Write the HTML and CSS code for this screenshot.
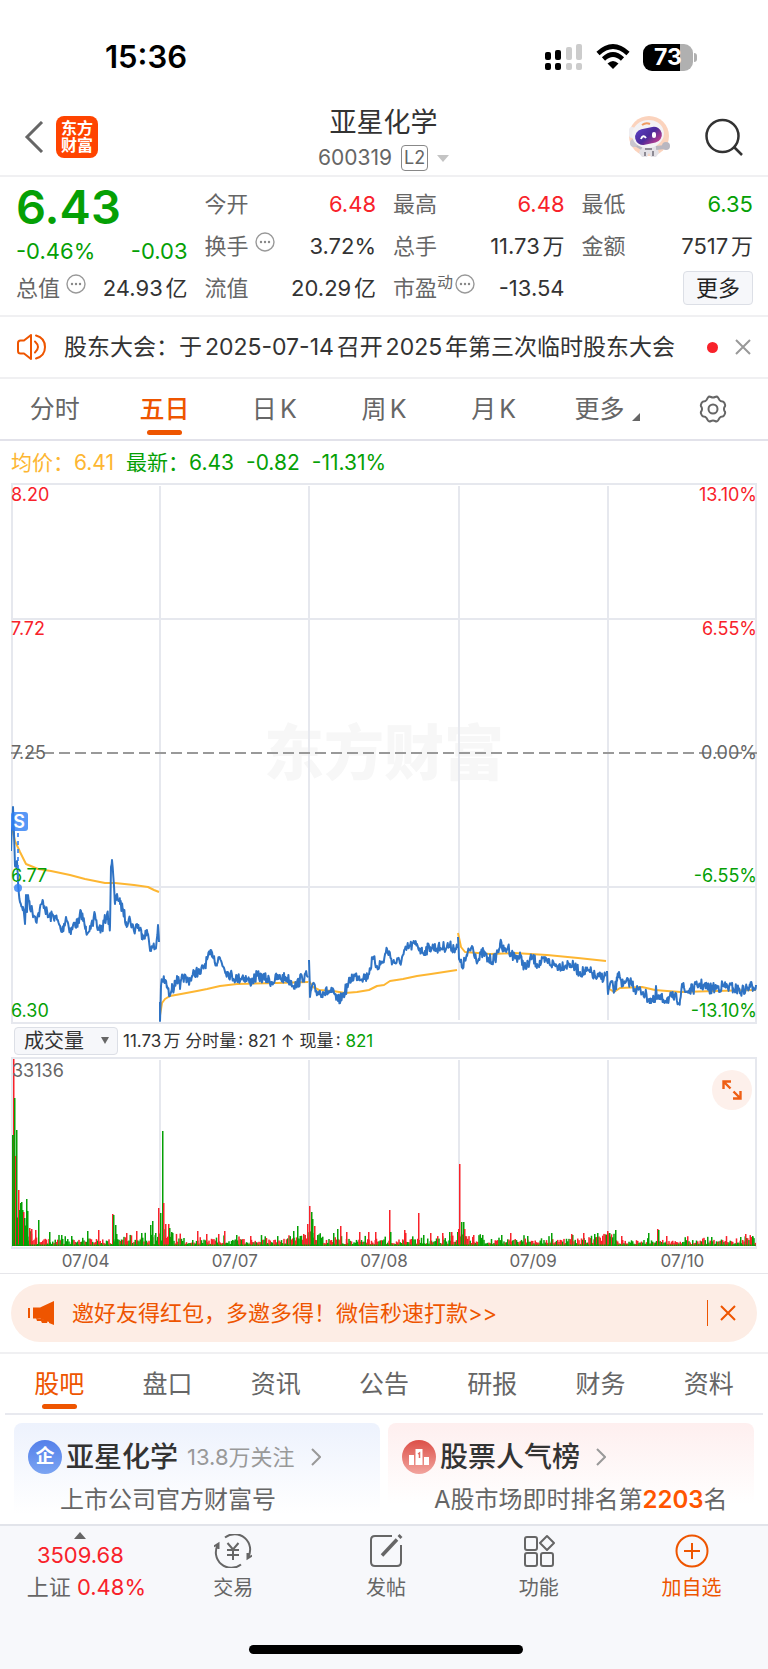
FILE: index.html
```html
<!DOCTYPE html>
<html lang="zh-CN">
<head>
    <meta charset="UTF-8">
    <meta name="viewport" content="width=device-width, initial-scale=1.0">
    <title>亚星化学 600319</title>
    <link rel="stylesheet" href="styles.css">
</head>
<body>
    <div class="statusbar">
        <span class="time">15:36</span>
        <div class="status-icons">
            <svg width="38" height="28" viewBox="0 0 38 28">
                <g fill="#000"><rect x="0" y="9" width="6" height="8" rx="2"/><rect x="10" y="7" width="6" height="10" rx="2"/><rect x="0" y="20" width="6" height="7" rx="2"/><rect x="10" y="20" width="6" height="7" rx="2"/></g>
                <g fill="#ccc"><rect x="21" y="4" width="6" height="13" rx="2"/><rect x="31" y="1" width="6" height="16" rx="2"/><rect x="21" y="20" width="6" height="7" rx="2"/><rect x="31" y="20" width="6" height="7" rx="2"/></g>
            </svg>
            <svg width="34" height="26" viewBox="0 0 34 26">
                <path d="M2 9.500Q17-4.500 32 9.500M7.500 15Q17 6 26.500 15" fill="none" stroke="#000" stroke-width="4.600"/>
                <path d="M11.500 19.500Q17 14.500 22.500 19.500L17 25Z"/>
            </svg>
            <div class="battery"><span>73</span></div>
        </div>
    </div>

    <header class="header">
        <div class="header-side">
            <button class="icon-btn" aria-label="返回">
                <svg width="20" height="32" viewBox="0 0 20 32"><path d="M18 1L3 16L18 31" fill="none" stroke="#666" stroke-width="3"/></svg>
            </button>
            <a class="logo" href="#">东方<br>财富</a>
        </div>
        <div class="title">
            <h1>亚星化学</h1>
            <div class="code">600319 <span class="level">L2</span> <i class="caret"></i></div>
        </div>
        <div class="header-side header-right">
            <button class="icon-btn" aria-label="智能助手">
                <svg width="42" height="42" viewBox="0 0 42 42">
                    <defs>
                        <linearGradient id="visor" x1="0" x2="1" y1="0" y2="1"><stop offset="0" stop-color="#5b3fc4"/><stop offset=".5" stop-color="#4b2a9a"/><stop offset="1" stop-color="#d8418c"/></linearGradient>
                    </defs>
                    <circle cx="21" cy="20" r="20" fill="#fbd3bd"/>
                    <path d="M14 28h14l3 9-3 4h-5l-2-4-2 4h-5l-3-4z" fill="#e3e1e6"/>
                    <path d="M17 33h7M17 36v4M25 35v5" stroke="#8d8a94" stroke-width="2"/>
                    <path d="M28 32L37 31M14 32L7 28" stroke="#b9b7c0" stroke-width="4"/>
                    <circle cx="6" cy="27" r="4" fill="#c9c6ce"/><circle cx="38" cy="30" r="4" fill="#b9b7c0"/>
                    <rect x="1" y="11" width="6" height="11" rx="3" fill="#eeedf1"/>
                    <ellipse cx="20" cy="18" rx="16" ry="14" fill="#f3f2f5" transform="rotate(-10 20 18)"/>
                    <path d="M14 9q4-3 8-1" stroke="#ef9b62" stroke-width="2" fill="none"/>
                    <rect x="7" y="12" width="27" height="16" rx="8" fill="url(#visor)" transform="rotate(-12 20 20)"/>
                    <path d="M13 23q2-5 5-1" stroke="#fff" stroke-width="2" fill="none"/><rect x="24" y="16" width="4" height="6" rx="2" fill="#fff"/>
                </svg>
            </button>
            <button class="icon-btn" aria-label="搜索">
                <svg width="38" height="38" viewBox="0 0 38 38" fill="none" stroke="#333" stroke-width="2.500"><circle cx="17.500" cy="18" r="16"/><path d="M29 29L37 37"/></svg>
            </button>
        </div>
    </header>

    <section class="quote">
        <div class="quote-col">
            <div class="price">6.43</div>
            <div class="change"><span>-0.46%</span><span>-0.03</span></div>
            <div class="row"><span class="label">总值 <svg class="more-dot" viewBox="0 0 20 20"><use href="#dots"/></svg></span><span>24.93亿</span></div>
        </div>
        <div class="quote-col">
            <div class="row"><span class="label">今开</span><span class="red">6.48</span></div>
            <div class="row"><span class="label">换手 <svg class="more-dot" viewBox="0 0 20 20"><use href="#dots"/></svg></span><span>3.72%</span></div>
            <div class="row"><span class="label">流值</span><span>20.29亿</span></div>
        </div>
        <div class="quote-col">
            <div class="row"><span class="label">最高</span><span class="red">6.48</span></div>
            <div class="row"><span class="label">总手</span><span>11.73万</span></div>
            <div class="row"><span class="label">市盈<sup>动</sup><svg class="more-dot" viewBox="0 0 20 20"><use href="#dots"/></svg></span><span>-13.54</span></div>
        </div>
        <div class="quote-col">
            <div class="row"><span class="label">最低</span><span class="green">6.35</span></div>
            <div class="row"><span class="label">金额</span><span>7517万</span></div>
            <div class="row row-end"><button class="more-btn">更多</button></div>
        </div>
        <svg class="defs" aria-hidden="true">
            <symbol id="dots" viewBox="0 0 20 20"><circle cx="10" cy="10" r="9" fill="none" stroke="#999" stroke-width="1.400"/><g fill="#888"><circle cx="6" cy="10" r="1.200"/><circle cx="10" cy="10" r="1.200"/><circle cx="14" cy="10" r="1.200"/></g></symbol>
        </svg>
    </section>

    <section class="notice">
        <svg width="30" height="26" viewBox="0 0 30 26" fill="none" stroke="#ee5500" stroke-width="2" stroke-linejoin="round"><path d="M14 1L7 6.500H3.500Q1 6.500 1 9V17Q1 19.500 3.500 19.500H7L14 25Z"/><path d="M18 7.500Q24 13 18 18.500M19 1.500Q28 4 28 13T19 24.500" stroke-linecap="round"/></svg>
        <a class="notice-text" href="#">股东大会：于2025-07-14召开2025年第三次临时股东大会</a>
        <i class="dot"></i>
        <button class="icon-btn" aria-label="关闭"><svg width="16" height="16" viewBox="0 0 16 16"><path d="M1 1L15 15M15 1L1 15" stroke="#999" stroke-width="2"/></svg></button>
    </section>

    <nav class="tabs period-tabs">
        <button>分时</button>
        <button class="active">五日</button>
        <button>日K</button>
        <button>周K</button>
        <button>月K</button>
        <button>更多<svg class="corner" width="8" height="8" viewBox="0 0 8 8"><path d="M8 0V8H0Z" fill="#666"/></svg></button>
        <button aria-label="设置">
            <svg width="28" height="28" viewBox="0 0 28 28" fill="none" stroke="#666" stroke-width="2" stroke-linejoin="round"><path d="M9 2.500Q10 1 12 2Q14 3 16 2Q18 1 19 2.500L20.500 5Q21.500 6.500 23.500 6.500Q25 6.500 26 9.500Q26.500 11 25.500 12Q24.500 14 25.500 16Q26.500 17 26 18.500Q25 21.500 23.500 21.500Q21.500 21.500 20.500 23L19 25.500Q18 27 16 26Q14 25 12 26Q10 27 9 25.500L7.500 23Q6.500 21.500 4.500 21.500Q3 21.500 2 18.500Q1.500 17 2.500 16Q3.500 14 2.500 12Q1.500 11 2 9.500Q3 6.500 4.500 6.500Q6.500 6.500 7.500 5Z"/><circle cx="14" cy="14" r="4.500"/></svg>
        </button>
    </nav>

    <main>
        <div class="averages">
            <span class="avg">均价：6.41</span>
            <span class="green">最新：6.43</span>
            <span class="green">-0.82</span>
            <span class="green">-11.31%</span>
        </div>

        <svg class="chart" viewBox="0 0 746 541">
            <text class="watermark" x="373" y="292" text-anchor="middle">东方财富</text>
            <g class="grid">
                <path d="M0 1H746M0 136H746M0 404H746M0 540H746M1 0V541M745 0V541M149 3V537M298 3V537M448 3V537M597 3V537"/>
            </g>
            <path class="zero" d="M0 270H746"/>
            <g id="averageLines" class="average-line"></g>
            <g id="priceLines" class="price-line"></g>
            <g class="axis">
                <text class="up" x="0" y="18">8.20</text>
                <text class="up" x="0" y="152">7.72</text>
                <text x="0" y="276">7.25</text>
                <text class="down" x="0" y="399">6.77</text>
                <text class="down" x="0" y="534">6.30</text>
            </g>
            <g class="axis" text-anchor="end">
                <text class="up" x="746" y="18">13.10%</text>
                <text class="up" x="746" y="152">6.55%</text>
                <text x="746" y="276">0.00%</text>
                <text class="down" x="746" y="399">-6.55%</text>
                <text class="down" x="746" y="534">-13.10%</text>
            </g>
            <!-- sell marker -->
            <g class="sell">
                <path d="M7 350V400" stroke-dasharray="4 4"/>
                <rect x="0" y="329" width="17" height="19" rx="3"/>
                <circle cx="7" cy="405" r="4"/>
                <text x="8" y="345" text-anchor="middle">S</text>
            </g>
        </svg>

        <div class="volume-bar">
            <select aria-label="指标">
                <option>成交量</option>
            </select>
            <span>11.73万 分时量: 821 ↑ 现量: <b class="green">821</b></span>
        </div>

        <div class="volume">
            <svg class="chart" viewBox="0 0 746 192">
                <g class="grid">
                    <path d="M0 1H746M0 191H746M1 0V192M745 0V192M149 3V189M298 3V189M448 3V189M597 3V189"/>
                </g>
                <g id="volumeBars"></g>
                <g class="axis"><text x="1" y="20">33136</text></g>
            </svg>
            <button class="expand" aria-label="全屏">
                <svg width="20" height="20" viewBox="0 0 20 20" fill="none" stroke="#ee5e14" stroke-width="2.400"><path d="M1.500 9V1.500H9M1.500 1.500L8.500 8.500M18.500 11V18.500H11M18.500 18.500L11.500 11.500"/></svg>
            </button>
        </div>
        <div class="dates">
            <span>07/04</span><span>07/07</span><span>07/08</span><span>07/09</span><span>07/10</span>
        </div>
    </main>

    <section class="promo-wrap">
        <div class="promo">
            <svg width="26" height="24" viewBox="0 0 26 24" fill="#ee5500"><path d="M0 7H2V17H0ZM5 6.500H12L26 0V24L21 22V21L12 17.500H5Z"/><path d="M8 17L9 20H13L14 22H19L20 19Z"/></svg>
            <a href="#">邀好友得红包，多邀多得！微信秒速打款&gt;&gt;</a>
            <i class="divider"></i>
            <button class="icon-btn" aria-label="关闭"><svg width="16" height="16" viewBox="0 0 16 16"><path d="M1 1L15 15M15 1L1 15" stroke="#ee5500" stroke-width="2"/></svg></button>
        </div>
    </section>

    <nav class="tabs info-tabs">
        <button class="active">股吧</button>
        <button>盘口</button>
        <button>资讯</button>
        <button>公告</button>
        <button>研报</button>
        <button>财务</button>
        <button>资料</button>
    </nav>

    <section class="cards">
        <a class="card card-blue" href="#">
            <div class="card-title">
                <span class="badge badge-blue">企</span>
                <strong>亚星化学</strong>
                <small>13.8万关注</small>
                <svg class="arrow" width="10" height="18" viewBox="0 0 10 18"><path d="M1 1L9 9L1 17"/></svg>
            </div>
            <p>上市公司官方财富号</p>
        </a>
        <a class="card card-red" href="#">
            <div class="card-title">
                <span class="badge badge-red"><svg width="20" height="18" viewBox="0 0 20 18"><path d="M0 7h5v10H0zM6.500 1h7v16h-7zM15 9h5v8h-5z" fill="#fff"/><path d="M9 6l1.500-1v5" stroke="#e26a62" stroke-width="1.500" fill="none"/></svg></span>
                <strong>股票人气榜</strong>
                <svg class="arrow" width="10" height="18" viewBox="0 0 10 18"><path d="M1 1L9 9L1 17"/></svg>
            </div>
            <p>A股市场即时排名第<b>2203</b>名</p>
        </a>
    </section>

    <footer class="footer">
        <nav class="toolbar">
            <a class="index" href="#">
                <i class="caret-up"></i>
                <span class="red">3509.68</span>
                <span class="index-name">上证 <span class="red">0.48%</span></span>
            </a>
            <a href="#">
                <svg width="38" height="34" viewBox="0 0 38 34" fill="none" stroke="#666" stroke-width="2"><path d="M11 3.500A15.500 15.500 0 0 1 34 23.500M27 30.500A15.500 15.500 0 0 1 4 10.500M38 21.500L33.500 24.500V19M0 12.500L4.500 9.500V15"/><path d="M13.500 9L19 15.500L24.500 9M19 15.500V26M13 16H25M13 21H25"/></svg>
                <span>交易</span>
            </a>
            <a href="#">
                <svg width="34" height="34" viewBox="0 0 34 34" fill="none" stroke="#666" stroke-width="2"><path d="M23 2H6Q2 2 2 6V28Q2 32 6 32H28Q32 32 32 28V11"/><path d="M13 21.500L28 5.500" stroke-width="3.500"/><path d="M30 3.500L32 1.500" stroke-width="4"/></svg>
                <span>发帖</span>
            </a>
            <a href="#">
                <svg width="32" height="34" viewBox="0 0 32 34" fill="none" stroke="#666" stroke-width="2"><rect x="2" y="3" width="12" height="13" rx="2"/><rect x="2" y="19" width="12" height="13" rx="2"/><rect x="18" y="19" width="12" height="13" rx="2"/><path d="M24 2L31 9L24 16L17 9Z" stroke-linejoin="round"/></svg>
                <span>功能</span>
            </a>
            <a class="add" href="#">
                <svg width="34" height="34" viewBox="0 0 34 34" fill="none" stroke="#ee5500" stroke-width="2"><circle cx="17" cy="17" r="15.500"/><path d="M17 9V25M9 17H25"/></svg>
                <span>加自选</span>
            </a>
        </nav>
        <div class="home-indicator"></div>
    </footer>

    <script src="script.js"></script>
</body>
</html>
```

FILE: styles.css
```css
* {
    box-sizing: border-box;
}

body {
    margin: 0;
    background-color: #fff;
    color: #333;
    font-family: Inter, "Noto Sans CJK SC", sans-serif;
    font-size: 22px;
    line-height: 32px;
    text-autospace: normal;
}

a {
    color: inherit;
    text-decoration: none;
}

button {
    padding: 0;
    border: none;
    background: none;
    color: inherit;
    font: inherit;
    cursor: pointer;
}

svg {
    display: block;
    flex: none;
}

.icon-btn {
    display: flex;
}

.defs {
    display: none;
}

.red {
    color: #f8222a;
}

.green {
    color: #05a005;
}

/* status bar */

.statusbar {
    display: flex;
    justify-content: space-between;
    align-items: center;
    padding: 36px 75px 0 105px;
}

.time {
    color: #000;
    font-size: 31px;
    font-weight: 600;
    line-height: 42px;
}

.status-icons {
    display: flex;
    align-items: center;
    gap: 13px;
}

.battery {
    position: relative;
    width: 50px;
    height: 27px;
    border-radius: 9px;
    background: linear-gradient(90deg, #000 73%, #b0b0b0 73%);
    color: #fff;
    font-size: 23px;
    font-weight: 700;
    line-height: 27px;
    text-align: center;
}

.battery::after {
    content: "";
    position: absolute;
    top: 9px;
    right: -4px;
    width: 3px;
    height: 9px;
    border-radius: 0 3px 3px 0;
    background-color: #b0b0b0;
}

/* header */

.header {
    display: grid;
    grid-template-columns: 1fr auto 1fr;
    align-items: center;
    height: 99px;
    padding: 20px 25px 0 24px;
    border-bottom: 2px solid #f0f0f2;
}

.header-side {
    display: flex;
    align-items: center;
    gap: 12px;
}

.header-right {
    justify-content: flex-end;
    gap: 35px;
}

.logo {
    width: 42px;
    height: 42px;
    padding-top: 4px;
    border-radius: 8px;
    background-color: #ff4400;
    color: #fff;
    font-size: 16px;
    font-weight: 700;
    line-height: 17px;
    text-align: center;
}

.title {
    padding-top: 7px;
    text-align: center;
}

.title h1 {
    margin: 0;
    font-size: 27px;
    font-weight: 400;
    line-height: 36px;
}

.code {
    display: flex;
    align-items: center;
    gap: 9px;
    color: #666;
    font-size: 21px;
    line-height: 34px;
}

.level {
    padding: 0 2px;
    border: 1px solid #888;
    border-radius: 4px;
    font-size: 18px;
    line-height: 24px;
}

.caret {
    border: 6px solid transparent;
    border-top: 7px solid #c4c4c4;
    border-bottom: none;
}

/* quote */

.quote {
    display: grid;
    grid-template-columns: repeat(4, 1fr);
    gap: 17px;
    padding: 6px 15px 6px 16px;
    border-bottom: 2px solid #f0f0f2;
}

.price {
    color: #05a005;
    font-size: 47px;
    font-weight: 600;
    line-height: 48px;
}

.change {
    display: flex;
    justify-content: space-between;
    padding-top: 4px;
    color: #05a005;
}

.row {
    display: flex;
    justify-content: space-between;
    align-items: center;
    height: 42px;
}

.row-end {
    justify-content: flex-end;
}

.label {
    display: flex;
    color: #666;
}

.label sup {
    font-size: 16px;
    line-height: 20px;
}

.more-dot {
    width: 20px;
    height: 20px;
    margin: 2px 0 0 6px;
}

sup + .more-dot {
    margin-left: 2px;
}

.more-btn {
    width: 70px;
    height: 34px;
    border: 1px solid #dcdfe6;
    border-radius: 4px;
    background-color: #f6f7fa;
    color: #222;
    line-height: 32px;
}

/* notice */

.notice {
    display: flex;
    align-items: center;
    height: 62px;
    padding: 0 17px;
    border-bottom: 2px solid #f0f0f2;
}

.notice-text {
    flex: 1;
    padding-left: 17px;
    font-size: 23px;
    white-space: nowrap;
}

.dot {
    width: 11px;
    height: 11px;
    margin-right: 17px;
    border-radius: 50%;
    background-color: #f8222a;
}

/* tabs */

.tabs {
    display: grid;
    grid-template-columns: repeat(7, 1fr);
    height: 62px;
    color: #666;
    font-size: 25px;
}

.tabs button {
    position: relative;
    display: flex;
    justify-content: center;
    align-items: center;
}

.tabs .active {
    color: #ee5500;
}

.tabs .active::after {
    content: "";
    position: absolute;
    bottom: 4px;
    width: 35px;
    height: 5px;
    border-radius: 3px;
    background-color: #ee5500;
}

.period-tabs {
    border-bottom: 2px solid #e2e2ea;
}

.period-tabs .active {
    font-weight: 500;
}

.corner {
    align-self: flex-end;
    margin: 0 -8px 18px 8px;
}

.info-tabs {
    height: 61px;
    margin: 0 5px;
    border-bottom: 2px solid #e8e9ef;
}

/* charts */

main {
    padding: 0 11px;
    border-bottom: 1px solid #e6e6ea;
}

.averages {
    display: flex;
    gap: 12px;
    padding: 6px 0 4px;
    font-size: 21px;
}

.avg {
    color: #fdb632;
}

.chart {
    width: 100%;
    height: auto;
}

.grid path {
    fill: none;
    stroke: #e6e8ee;
    stroke-width: 2;
}

.zero {
    stroke: #999;
    stroke-width: 2;
    stroke-dasharray: 11 5;
}

.watermark {
    fill: #f7f7f7;
    font-size: 60px;
    font-weight: 900;
}

.axis {
    fill: #666;
    font-size: 18px;
}

.axis .up {
    fill: #f8222a;
}

.axis .down {
    fill: #05a005;
}

.price-line,
.average-line {
    fill: none;
    stroke: #2f73c4;
    stroke-width: 2;
    stroke-linejoin: round;
}

.average-line {
    stroke: #fdb632;
}

.sell {
    fill: #2f7ff5;
    opacity: 0.8;
}

.sell path {
    stroke: #2f7ff5;
    stroke-width: 2;
}

.sell text {
    fill: #fff;
    font-size: 18px;
    font-weight: 600;
}

.volume-bar {
    display: flex;
    align-items: center;
    gap: 5px;
    height: 33px;
    padding-left: 3px;
    font-size: 17px;
}

.volume-bar select {
    width: 104px;
    height: 28px;
    padding: 0 9px;
    appearance: none;
    border: 1px solid #dcdfe6;
    border-radius: 4px;
    background-color: #f6f7fa;
    background-image: url("data:image/svg+xml,%3Csvg xmlns='http://www.w3.org/2000/svg' viewBox='0 0 8 7'%3E%3Cpath d='M0 0H8L4 7Z' fill='%23666'/%3E%3C/svg%3E");
    background-repeat: no-repeat;
    background-position: 86px 9px;
    background-size: 8px 7px;
    color: #333;
    font: inherit;
    font-size: 20px;
    line-height: 26px;
}

.volume-bar b {
    font-weight: 400;
}

.volume {
    position: relative;
}

.expand {
    position: absolute;
    top: 13px;
    right: 5px;
    display: flex;
    justify-content: center;
    align-items: center;
    width: 40px;
    height: 40px;
    border-radius: 50%;
    background-color: #fdf0eb;
}

.dates {
    display: grid;
    grid-template-columns: repeat(5, 1fr);
    color: #666;
    font-size: 17px;
    line-height: 24px;
    text-align: center;
}

/* promo */

.promo-wrap {
    padding: 10px 11px;
    border-bottom: 2px solid #f0f0f2;
}

.promo {
    display: flex;
    align-items: center;
    height: 58px;
    padding: 0 21px 0 17px;
    border-radius: 29px;
    background-color: #fdede5;
    color: #ee5500;
}

.promo a {
    flex: 1;
    padding-left: 18px;
}

.divider {
    width: 1px;
    height: 26px;
    margin-right: 12px;
    background-color: #ee5500;
}

/* cards */

.cards {
    display: grid;
    grid-template-columns: 1fr 1fr;
    gap: 8px;
    padding: 8px 14px 0;
    text-autospace: no-autospace;
}

.card {
    height: 101px;
    padding: 14px 14px 0;
    border-radius: 8px 8px 0 0;
}

.card-blue {
    background: linear-gradient(#edf2fd, #fff 90%);
}

.card-red {
    background: linear-gradient(#feefef, #fff 80%);
}

.card-title {
    display: flex;
    align-items: center;
    height: 40px;
}

.card strong {
    margin-left: 4px;
    font-size: 28px;
    font-weight: 500;
}

.card small {
    margin-left: 9px;
    color: #999;
    font-size: 22px;
}

.card p {
    margin: 7px 0 0;
    padding-left: 32px;
    color: #666;
    font-size: 24px;
    white-space: nowrap;
}

.card b {
    color: #ff5500;
    font-weight: 600;
}

.badge {
    display: flex;
    justify-content: center;
    align-items: center;
    width: 34px;
    height: 34px;
    border-radius: 50%;
    color: #fff;
    font-size: 19px;
    font-weight: 700;
}

.badge-blue {
    background: linear-gradient(#5480ea, #7ba4f2);
}

.badge-red {
    background: linear-gradient(#dc4f48, #f2a49e);
}

.arrow {
    margin-left: 16px;
    fill: none;
    stroke: #999;
    stroke-width: 2;
}

/* footer */

.footer {
    height: 145px;
    padding: 0 0 0 4px;
    border-top: 2px solid #e2e4ea;
    background-color: #f7f8fb;
}

.toolbar {
    display: grid;
    grid-template-columns: repeat(5, 1fr);
    color: #666;
    font-size: 20px;
}

.toolbar a {
    display: flex;
    flex-direction: column;
    align-items: center;
    padding-top: 8px;
}

.toolbar a > svg {
    margin-bottom: 4px;
}

.toolbar .index {
    padding-top: 6px;
    font-size: 22px;
}

.index-name {
    padding-left: 12px;
}

.toolbar .add {
    color: #ee5500;
}

.caret-up {
    border: 6px solid transparent;
    border-top: none;
    border-bottom: 7px solid #666;
}

.home-indicator {
    width: 274px;
    height: 9px;
    margin: 41px auto 0;
    border-radius: 5px;
    background-color: #000;
}
```

FILE: script.js
```js
var SVG = "http://www.w3.org/2000/svg";

// x, y pairs, one list per trading day
var prices = [
    [0,368, 2,324, 4,383, 6,378, 7,399, 9,419, 12,424, 14,441, 15,412, 16,429, 17,412, 20,426, 26,436, 32,418, 37,434, 44,433, 51,449, 55,434, 60,449, 63,441, 68,440, 70,428, 75,448, 79,443, 82,443, 84,431, 86,444, 91,446, 96,431, 99,443, 100,384, 101,377, 104,421, 106,411, 109,421, 112,426, 115,439, 119,436, 123,448, 126,441, 131,451, 137,451, 140,468, 142,464, 145,465, 147,442, 148,459],
    [149,519, 149,538, 150,503, 153,496, 156,503, 158,513, 161,501, 163,506, 166,493, 169,506, 172,493, 176,498, 181,494, 185,488, 189,491, 194,481, 201,469, 206,481, 208,474, 216,489, 221,493, 227,496, 232,493, 239,499, 246,493, 256,496, 261,499, 266,495, 276,495, 285,503, 291,494, 297,493],
    [298,477, 299,514, 301,503, 306,509, 312,509, 321,509, 327,518, 331,514, 336,504, 341,494, 346,493, 356,494, 362,476, 366,483, 372,479, 376,466, 382,479, 389,479, 397,464, 406,461, 411,469, 419,464, 429,465, 436,463, 446,465],
    [447,454, 448,476, 451,484, 456,473, 461,463, 467,478, 472,469, 477,477, 484,476, 489,461, 493,468, 497,464, 502,473, 509,474, 515,486, 521,474, 526,481, 536,478, 546,483, 559,481, 569,489, 579,489, 586,495, 595,493],
    [596,488, 597,511, 600,499, 603,509, 606,498, 608,489, 612,503, 619,498, 624,506, 632,509, 638,516, 644,519, 645,503, 646,516, 656,516, 661,514, 669,517, 671,501, 674,509, 682,506, 689,501, 699,506, 712,503, 722,505, 731,508, 739,504, 745,502]
];

var averages = [
    [1,345, 4,358, 9,369, 15,381, 27,386, 40,388, 59,392, 74,396, 94,400, 104,400, 123,402, 137,404, 143,407, 148,409],
    [149,532, 151,520, 154,516, 159,513, 170,511, 186,508, 196,506, 209,503, 226,501, 266,500, 297,499],
    [298,498, 302,504, 308,507, 322,508, 334,510, 346,509, 358,507, 366,503, 373,502, 379,498, 392,496, 406,493, 420,491, 446,487],
    [447,450, 450,464, 454,469, 479,471, 503,470, 536,472, 567,475, 595,478],
    [597,505, 603,509, 609,505, 631,504, 644,507, 656,508, 670,509, 704,508, 745,507]
];

// x, height, 1 = rising, 0 = falling
var peaks = [
    [2,187,1], [1,111,0], [3,148,0], [4,90,1], [5,116,0], [7,56,1], [8,36,0], [9,43,0], [10,44,0], [11,36,0], [12,34,1], [13,28,0], [15,47,0], [16,35,0], [18,18,1], [20,17,1], [24,16,1], [27,26,0],
    [38,14,0], [50,11,0], [60,10,0], [76,15,0], [87,16,1], [101,32,1], [102,31,0], [104,21,0], [105,12,0], [115,13,1], [125,15,1], [130,13,0], [139,21,0], [141,25,0], [144,13,0], [147,38,1], [149,33,0],
    [151,115,0], [152,43,1], [154,22,1], [157,22,1], [158,18,0], [160,14,0], [186,15,1], [195,12,1], [207,12,1], [213,15,1], [225,11,0], [239,10,1], [282,15,0], [286,20,0], [292,12,1], [296,22,1],
    [298,40,1], [300,34,0], [301,27,0], [303,20,1], [322,13,0], [326,17,0], [329,20,1], [335,14,1], [348,14,1], [357,14,1], [364,14,1], [378,36,1], [379,14,0], [393,16,1], [394,13,1], [407,33,1], [412,11,0], [419,13,1], [431,13,1], [438,14,0], [440,14,1],
    [447,17,1], [448,82,1], [450,24,0], [452,24,0], [453,17,1], [462,11,1], [490,11,0], [499,13,1], [516,10,0], [540,13,0], [560,12,1], [572,13,1], [583,12,0], [586,13,0],
    [596,15,1], [598,13,0], [604,16,0], [610,10,1], [637,13,0], [646,17,1], [647,16,0], [655,10,1], [700,9,0], [729,9,0], [734,12,1], [741,10,0]
];

var seed = 7;

function random() {
    seed = (seed * 16807) % 2147483647;
    return seed / 2147483647;
}

function addLine(parent, points) {
    var line = document.createElementNS(SVG, "polyline");
    line.setAttribute("points", points.join(" "));
    document.getElementById(parent).appendChild(line);
}

function addBar(x, height, up) {
    var bar = document.createElementNS(SVG, "rect");
    bar.setAttribute("x", x);
    bar.setAttribute("y", 189 - height);
    bar.setAttribute("width", 1.5);
    bar.setAttribute("height", height);
    bar.setAttribute("fill", up ? "#f8222a" : "#05a005");
    document.getElementById("volumeBars").appendChild(bar);
}

// fills the minutes between two known prices with small ticks
function ticks(day) {
    var points = [];
    for (var i = 0; i < day.length - 2; i += 2) {
        var x = day[i], y = day[i + 1];
        var nx = day[i + 2], ny = day[i + 3];
        points.push(x + "," + y);
        for (var t = x + 0.7; t < nx; t += 0.7) {
            var level = y + (ny - y) * (t - x) / (nx - x);
            points.push(t.toFixed(1) + "," + (level + (random() - 0.5) * 11).toFixed(1));
        }
    }
    points.push(day[day.length - 2] + "," + day[day.length - 1]);
    return points;
}

averages.forEach(function(day) {
    addLine("averageLines", day);
});

prices.forEach(function(day) {
    addLine("priceLines", ticks(day));
});

for (var x = 1; x < 744; x += 1.25) {
    var edge = Math.min(x % 149, 149 - x % 149);
    var base = x < 30 ? 32 - x : 5 + 8 * Math.exp(-edge / 12);
    if (x > 610 && x < 730) {
        base = 4;
    }
    addBar(x, 2 + base * random() + (random() > 0.85 ? 4 : 0), random() > 0.5);
}

for (var g = 1; g < 16; g++) {
    addBar(g, 34 - g, 0);
}

peaks.forEach(function(p) {
    addBar(p[0], p[1], p[2]);
});

addBar(1, 111, 0);

for (var b = 1; b < 744; b += 2) {
    addBar(b, 1.5, 0);
}
```
